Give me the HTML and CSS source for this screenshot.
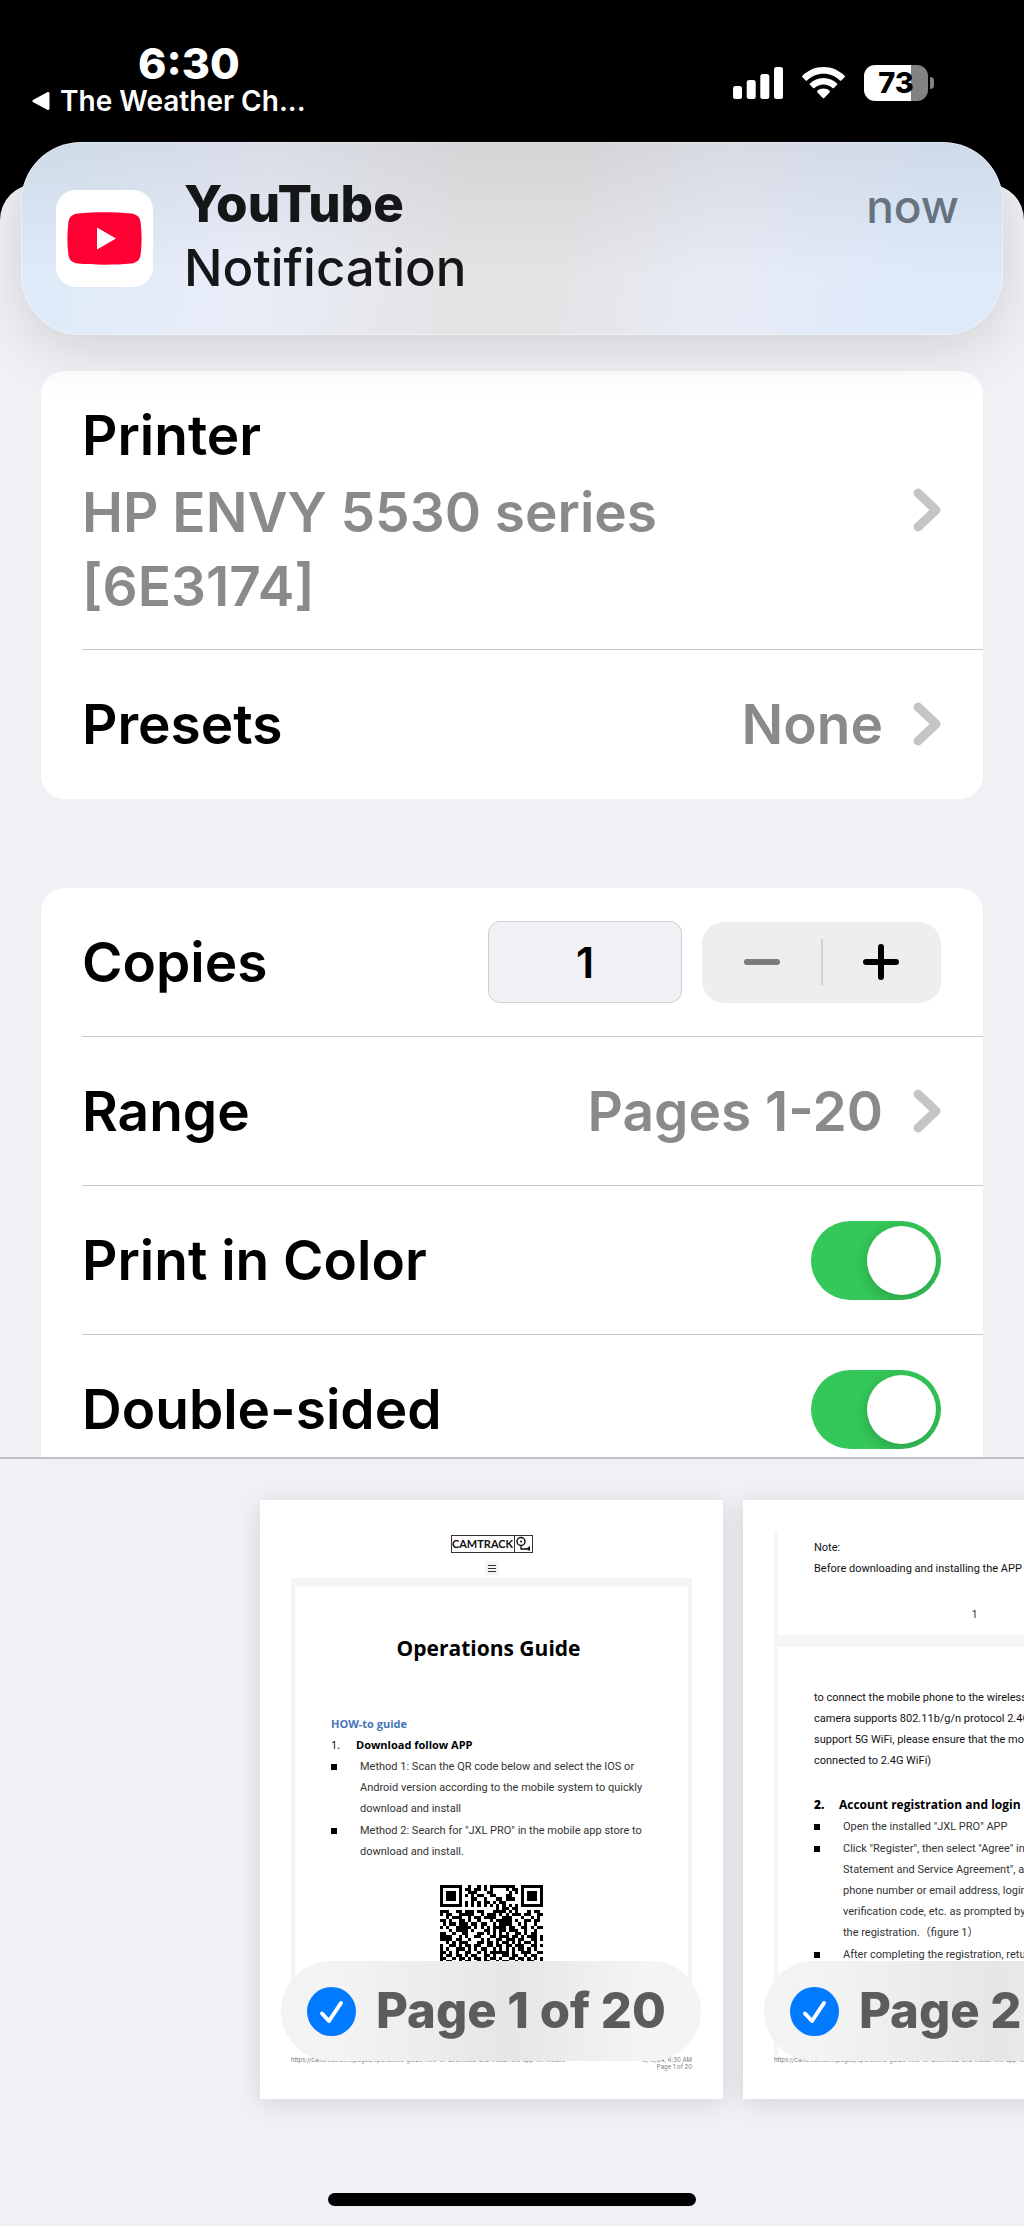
FILE: index.html
```html
<!DOCTYPE html>
<html lang="en">
  <head>
    <meta charset="UTF-8" />
    <meta name="viewport" content="width=device-width, initial-scale=1.0" />
    <title>Print Options</title>
    <link rel="stylesheet" href="styles.css">
  </head>
  <body>
    <div class="screen">
      <!-- Status bar -->
      <header class="status-bar">
        <div class="status-left">
          <div class="status-time">6:30</div>
          <a class="status-back" href="#">
            <svg width="18" height="18" viewBox="0 0 18 18"><path d="M16 1.5v15L2 9z" fill="#fff" stroke="#fff" stroke-width="3" stroke-linejoin="round" /></svg>
            The Weather Ch...
          </a>
        </div>
        <div class="status-right">
          <svg width="50" height="32" viewBox="0 0 50 32" fill="#fff">
            <rect x="0" y="19" width="9" height="13" rx="2.5" />
            <rect x="13.7" y="13" width="9" height="19" rx="2.5" />
            <rect x="27.3" y="7" width="9" height="25" rx="2.5" />
            <rect x="41" y="0" width="9" height="32" rx="2.5" />
          </svg>
          <svg width="43" height="32" viewBox="0 0 43 32" fill="#fff">
            <path d="M21.500 0C13.200 0 5.700 3.400.4 8.800c-.4.400-.4 1 0 1.400l3.300 3.200c.4.400 1 .4 1.400 0C9.300 9.200 15.100 6.700 21.500 6.700s12.200 2.500 16.400 6.700c.4.400 1 .4 1.400 0l3.300-3.200c.4-.4.4-1 0-1.400C37.300 3.400 29.800 0 21.500 0z" />
            <path d="M21.500 10.900c-5.300 0-10.100 2.100-13.600 5.500-.4.400-.4 1 0 1.400l3.200 3.200c.4.400 1 .4 1.400 0 2.400-2.200 5.500-3.600 9-3.600s6.600 1.400 9 3.600c.4.400 1 .4 1.400 0l3.200-3.200c.4-.4.4-1 0-1.400-3.500-3.400-8.300-5.500-13.600-5.500z" />
            <path d="M21.500 21.600c-2.400 0-4.500.8-6.200 2.200-.4.400-.4 1 0 1.400l5.500 5.700c.4.400 1 .4 1.400 0l5.500-5.700c.4-.4.4-1 0-1.400-1.700-1.400-3.800-2.200-6.200-2.200z" />
          </svg>
          <div class="battery">
            <div class="battery-body">73</div>
            <div class="battery-tip"></div>
          </div>
        </div>
      </header>

      <!-- Print options sheet -->
      <main class="sheet">
        <div class="options">
          <section class="card">
            <button class="row row-tall" type="button">
              <span class="row-text">
                <span class="row-title">Printer</span>
                <span class="row-value">HP ENVY 5530 series [6E3174]</span>
              </span>
              <svg class="chevron" width="28" height="44" viewBox="0 0 28 44"><path d="M5 5l18 17L5 39" /></svg>
            </button>
            <button class="row" type="button">
              <span class="row-title">Presets</span>
              <span class="row-value">None</span>
              <svg class="chevron" width="28" height="44" viewBox="0 0 28 44"><path d="M5 5l18 17L5 39" /></svg>
            </button>
          </section>

          <section class="card">
            <div class="row">
              <label class="row-title" for="copies">Copies</label>
              <input class="copies-input" id="copies" type="text" inputmode="numeric" value="1" />
              <div class="stepper">
                <button type="button" aria-label="Decrease" disabled>
                  <svg width="36" height="36" viewBox="0 0 36 36"><path d="M3 18h30" /></svg>
                </button>
                <button type="button" aria-label="Increase">
                  <svg width="36" height="36" viewBox="0 0 36 36"><path d="M3 18h30M18 3v30" /></svg>
                </button>
              </div>
            </div>
            <button class="row" type="button">
              <span class="row-title">Range</span>
              <span class="row-value">Pages 1-20</span>
              <svg class="chevron" width="28" height="44" viewBox="0 0 28 44"><path d="M5 5l18 17L5 39" /></svg>
            </button>
            <div class="row">
              <label class="row-title" for="color">Print in Color</label>
              <input class="switch" id="color" type="checkbox" checked />
            </div>
            <div class="row">
              <label class="row-title" for="duplex">Double-sided</label>
              <input class="switch" id="duplex" type="checkbox" checked />
            </div>
          </section>
        </div>

        <!-- Page previews -->
        <section class="previews">
          <article class="page">
            <div class="page-logo">
              <span>CAMTRACK</span>
              <svg width="17" height="16" viewBox="0 0 17 16" fill="none" stroke="#111">
                <circle cx="6" cy="5.500" r="4" stroke-width="1.500" />
                <circle cx="6" cy="5.500" r="1" fill="#111" stroke="none" />
                <path d="M6 9.500v3.500h6" stroke-width="1.300" />
                <path d="M11 13l4-3v5z" fill="#111" stroke="none" />
              </svg>
            </div>
            <div class="page-menu">
              <svg width="8" height="8" viewBox="0 0 8 8" stroke="#333"><path d="M0 1.500h8M0 4.500h8M0 7.500h8" /></svg>
            </div>
            <div class="doc doc-first">
              <h1>Operations Guide</h1>
              <h2>HOW-to guide</h2>
              <h3><i>1.</i>Download follow APP</h3>
              <ul>
                <li>Method 1: Scan the QR code below and select the IOS or<br />Android version according to the mobile system to quickly<br />download and install</li>
                <li>Method 2: Search for "JXL PRO" in the mobile app store to<br />download and install.</li>
              </ul>
              <svg class="qr" width="103" height="103" viewBox="0 0 33 33" shape-rendering="crispEdges"><path id="qr-modules" /></svg>
            </div>
            <div class="page-footer">
              <span>https://camtrack.com/pages/operations-guide-how-to-download-and-install-the-app-on-mobile</span>
              <span>10/10/24, 6:30 AM<br />Page 1 of 20</span>
            </div>
            <label class="page-badge">
              <input type="checkbox" checked />
              <svg width="49" height="49" viewBox="0 0 49 49"><circle cx="24.500" cy="24.500" r="24.500" /><path d="M15 26.500l7 7.500 12-18" /></svg>
              Page 1 of 20
            </label>
          </article>

          <article class="page">
            <div class="doc doc-tail">
              <p>Note:<br />Before downloading and installing the APP</p>
              <div class="doc-number">1</div>
            </div>
            <div class="doc doc-next">
              <p>to connect the mobile phone to the wireless<br />camera supports 802.11b/g/n protocol 2.4G<br />support 5G WiFi, please ensure that the mobile<br />connected to 2.4G WiFi)</p>
              <h3><b>2.</b>Account registration and login</h3>
              <ul>
                <li>Open the installed "JXL PRO" APP</li>
                <li>Click "Register", then select "Agree" in<br />Statement and Service Agreement", a<br />phone number or email address, login<br />verification code, etc. as prompted by<br />the registration.（figure 1）</li>
                <li>After completing the registration, return</li>
              </ul>
            </div>
            <div class="page-footer">
              <span>https://camtrack.com/pages/operations-guide-how-to-download-and-install-the-app-on-mobile<br />&nbsp;</span>
            </div>
            <label class="page-badge">
              <input type="checkbox" checked />
              <svg width="49" height="49" viewBox="0 0 49 49"><circle cx="24.500" cy="24.500" r="24.500" /><path d="M15 26.500l7 7.500 12-18" /></svg>
              Page 2 of 20
            </label>
          </article>
        </section>
      </main>

      <!-- Notification banner over the sheet -->
      <aside class="notification">
        <svg width="97" height="97" viewBox="0 0 97 97">
          <rect width="97" height="97" rx="20" fill="#fff" />
          <path d="M22 23.500c16-1.600 37-1.600 53 0 6 .7 9 3.500 9.700 9.500 1.200 10 1.200 21 0 31-.7 6-3.700 8.800-9.700 9.500-16 1.600-37 1.600-53 0-6-.7-9-3.500-9.700-9.500-1.200-10-1.200-21 0-31 .7-6 3.700-8.800 9.700-9.500z" fill="#ff0033" />
          <path d="M41 37.500v22l19-11z" fill="#fff" />
        </svg>
        <div class="notification-text">
          <strong>YouTube</strong>
          <span>Notification</span>
        </div>
        <time>now</time>
      </aside>

      <div class="home-indicator"></div>
    </div>

    <script src="qr.js"></script>
  </body>
</html>
```
FILE: styles.css
```css
* {
  box-sizing: border-box;
}

body {
  font-family: Inter, "Liberation Sans", sans-serif;
  margin: 0;
  background-color: #000;
  color: #000;
}

button,
input {
  font: inherit;
  color: inherit;
  margin: 0;
  border: none;
}

svg {
  display: block;
  flex: none;
}

.screen {
  position: relative;
  height: 100vh;
  display: flex;
  flex-direction: column;
  overflow: hidden;
}

/* status bar */
.status-bar {
  height: 184px;
  flex: none;
  display: flex;
  justify-content: space-between;
  color: #fff;
}

.status-left {
  padding: 40px 0 0 32px;
}

.status-time {
  font-size: 43px;
  line-height: 46px;
  font-weight: 800;
  text-align: center;
  padding-left: 40px;
}

.status-back {
  display: flex;
  align-items: center;
  gap: 10px;
  color: #fff;
  font-size: 28px;
  line-height: 30px;
  font-weight: 600;
  text-decoration: none;
}

.status-right {
  display: flex;
  gap: 19px;
  align-items: center;
  height: 36px;
  margin: 65px 90px 0 0;
}

.battery {
  display: flex;
  align-items: center;
  gap: 2px;
}

.battery-body {
  width: 64px;
  height: 36px;
  border-radius: 11px;
  background: linear-gradient(to right, #fff 73%, #828282 73%);
  color: #000;
  font-size: 29px;
  line-height: 36px;
  font-weight: 800;
  text-align: center;
}

.battery-tip {
  width: 4px;
  height: 12px;
  border-radius: 0 4px 4px 0;
  background-color: #828282;
}

/* sheet */
.sheet {
  flex: 1;
  min-height: 0;
  display: flex;
  flex-direction: column;
  background-color: #f1f0f5;
  border-radius: 36px 36px 0 0;
}

.options {
  flex: 1;
  min-height: 0;
  overflow: hidden;
  padding: 187px 41px 0;
  display: flex;
  flex-direction: column;
  gap: 89px;
}

.card {
  flex: none;
  background-color: #fff;
  border-radius: 24px;
}

.row {
  position: relative;
  width: 100%;
  min-height: 149px;
  padding: 0 42px 1px 41px;
  display: flex;
  align-items: center;
  background: none;
  text-align: left;
  font-size: 55px;
  line-height: 74px;
  font-weight: 600;
}

.row + .row::before {
  content: "";
  position: absolute;
  top: -1px;
  left: 41px;
  right: 0;
  height: 1px;
  background-color: #c9c9cb;
}

.row-tall {
  min-height: 279px;
}

.row-text {
  flex: 1;
  max-width: 640px;
  display: flex;
  flex-direction: column;
  gap: 3px;
}

.row-title {
  flex: 1;
}

.row-value {
  color: #8a8a8a;
}

.chevron {
  margin-left: auto;
  fill: none;
  stroke: #c5c5c7;
  stroke-width: 9;
  stroke-linecap: round;
  stroke-linejoin: round;
}

.row-title + .row-value + .chevron {
  margin-left: 30px;
}

.copies-input {
  width: 194px;
  height: 82px;
  margin-right: 20px;
  border: 1px solid #cfcfd3;
  border-radius: 12px;
  background-color: #f1f0f5;
  font-size: 43px;
  text-align: center;
}

.stepper {
  width: 239px;
  height: 81px;
  display: flex;
  border-radius: 22px;
  background: linear-gradient(#d2d2d4, #d2d2d4) center / 2px 46px no-repeat #eeeeee;
}

.stepper button {
  flex: 1;
  padding: 0;
  display: flex;
  align-items: center;
  justify-content: center;
  background: none;
}

.stepper svg {
  fill: none;
  stroke: #000;
  stroke-width: 6;
  stroke-linecap: round;
}

.stepper button:disabled svg {
  stroke: #7b7b7b;
}

.switch {
  appearance: none;
  width: 130px;
  height: 79px;
  border-radius: 40px;
  background-color: #e9e9eb;
  overflow: hidden;
}

.switch::before {
  content: "";
  display: block;
  width: 69px;
  height: 69px;
  margin: 5px;
  border-radius: 50%;
  background-color: #fff;
  box-shadow: 0 4px 14px rgba(0, 0, 0, 0.2);
}

.switch:checked {
  background-color: #34c759;
}

.switch:checked::before {
  margin-left: 56px;
}

/* page previews */
.previews {
  flex: none;
  display: flex;
  gap: 20px;
  padding: 41px 0 127px 260px;
  border-top: 2px solid #c1c0c6;
  overflow: hidden;
}

.page {
  position: relative;
  flex: none;
  width: 463px;
  height: 599px;
  padding: 30px 31px 0;
  background-color: #fff;
  box-shadow: 0 4px 24px rgba(0, 0, 0, 0.12);
  font-family: Roboto, "Noto Sans CJK SC", sans-serif;
  font-size: 11px;
  line-height: 21px;
  color: #333;
}

.page-logo {
  display: flex;
  align-items: center;
  width: 82px;
  height: 18px;
  margin: 5px auto 0;
  border: 1px solid #333;
  font-family: Lato, sans-serif;
  font-size: 11px;
  line-height: 16px;
  font-weight: 700;
  color: #111;
}

.page-logo span {
  width: 64px;
  text-align: center;
  border-right: 1px solid #333;
}

.page-menu {
  width: 14px;
  height: 14px;
  margin: 8px auto 3px;
  display: flex;
  align-items: center;
  justify-content: center;
  background-color: #f2f2f2;
}

.doc {
  border: solid #f5f5f5;
  border-width: 0 4px;
  padding: 0 36px;
  white-space: nowrap;
}

.doc h1,
.doc h2,
.doc h3 {
  font-family: "Open Sans", "Noto Sans", sans-serif;
  font-weight: 700;
  color: #000;
}

.doc h1 {
  margin: 0 0 50px;
  padding-right: 6px;
  font-size: 21px;
  line-height: 30px;
  text-align: center;
}

.doc h2,
.doc h3 {
  margin: 0;
  font-size: 11px;
  line-height: 21px;
}

.doc h2 {
  color: #4674b8;
}

.doc h3 i,
.doc h3 b {
  display: inline-block;
  width: 25px;
}

.doc h3 i {
  font-style: normal;
  font-weight: 400;
}

.doc p {
  margin: 0;
  color: #111;
}

.doc ul {
  margin: 1px 0 0;
  padding: 0;
  list-style: none;
}

.doc li {
  position: relative;
  padding-left: 29px;
  margin-bottom: 1px;
}

.doc li::before {
  content: "";
  position: absolute;
  left: 0;
  top: 8px;
  width: 6px;
  height: 6px;
  background-color: #000;
}

.doc-first {
  height: 460px;
  border-top-width: 9px;
  padding-top: 46px;
}

.doc-tail {
  height: 105px;
  padding-top: 7px;
}

.doc-number {
  margin-top: 25px;
  text-align: center;
}

.doc-next {
  height: 426px;
  border-top-width: 12px;
  padding-top: 40px;
}

.doc-next h3 {
  margin-top: 23px;
  font-size: 12px;
}

.qr {
  margin: 23px auto 0;
}

.page-footer {
  position: absolute;
  left: 31px;
  right: 31px;
  bottom: 29px;
  display: flex;
  justify-content: space-between;
  font-family: Inter, sans-serif;
  font-size: 6px;
  line-height: 7px;
  color: #777;
  white-space: nowrap;
}

.page-footer span:last-child:not(:first-child) {
  text-align: right;
}

.page-badge {
  position: absolute;
  left: 21px;
  right: 22px;
  bottom: 38px;
  height: 100px;
  padding-left: 26px;
  display: flex;
  align-items: center;
  gap: 20px;
  border-radius: 50px;
  background: linear-gradient(to right, #f3f3f3 15%, #e6e6e6 55%, #f4f4f4 85%);
  font-family: Inter, sans-serif;
  font-size: 49px;
  line-height: 60px;
  font-weight: 800;
  color: #5c5c5c;
  white-space: nowrap;
}

.page-badge input {
  position: absolute;
  opacity: 0;
}

.page-badge circle {
  fill: #007aff;
}

.page-badge path {
  fill: none;
  stroke: #fff;
  stroke-width: 4;
  stroke-linecap: round;
  stroke-linejoin: round;
}

/* notification banner */
.notification {
  position: absolute;
  top: 142px;
  left: 21px;
  right: 21px;
  height: 193px;
  padding: 0 44px 0 35px;
  display: flex;
  align-items: center;
  border-radius: 60px;
  background:
    linear-gradient(to bottom, rgba(0, 0, 0, 0.07), rgba(0, 0, 0, 0) 70%),
    linear-gradient(100deg, #dfebf9 5%, #e9edf8 25%, #e4e4e6 45%, #e4e4e6 55%, #e8ebf5 70%, #deeafa 90%);
  box-shadow: 0 12px 60px rgba(0, 0, 0, 0.14), inset 0 0 0 1px rgba(255, 255, 255, 0.4);
  color: #141618;
}

.notification-text {
  flex: 1;
  margin-left: 31px;
  padding-bottom: 5px;
  display: flex;
  flex-direction: column;
  font-size: 51px;
  line-height: 64px;
}

.notification-text strong {
  font-weight: 800;
}

.notification-text span {
  font-weight: 500;
}

.notification time {
  align-self: flex-start;
  margin-top: 32px;
  font-size: 46px;
  line-height: 64px;
  font-weight: 500;
  color: #66727f;
}

.home-indicator {
  position: absolute;
  left: 32%;
  right: 32%;
  bottom: 20px;
  height: 13px;
  border-radius: 7px;
  background-color: #000;
}
```
FILE: qr.js
```javascript
// one string per row, # is a dark module
const rows = [
  "#######..#..#.#.########..#######",
  "#.....#.##.##.#.#....#.##.#.....#",
  "#.###.#..###...##.....#.#.#.###.#",
  "#.###.#.#.#.##..##...##...#.###.#",
  "#.###.#...##..#...##.###..#.###.#",
  "#.....#.#.#.#.##.#.##.....#.....#",
  "#######.#.#.#.#.#.#.#.#.#.#######",
  "..................#.##.##........",
  "###..##.###.##...####.#.#...#.##.",
  "#.##..#####..#.###.#.#.###.##..##",
  "..#.###..#.##.####..###...#..#.#.",
  "##.#..##.#..#...#.#####.#..##.##.",
  ".#.##.###.##.##..#.####..#.#..#..",
  "#.#..#####.#.#.#.####.##..##.#.##",
  "...#.####.#...##.#.##.###..#..#..",
  "##..#..##...##.#.#.#.#..##.#.##..",
  "####..#.#..##...##.###.##.#.###.#",
  "####.##..#...#.#..##.###.##..##.#",
  "..#.#.###...##.##.#.##.#.#.##.#..",
  "#..##.#.##.##..##.##.##.###..##.#",
  "#.#..###.#.#.##..#.#.#.#.##.#.#..",
  "##.#.#..##..#.#.######.#..###..##",
  "#.##.##.#.##..##.#..##.##..#.##..",
  "##..#.##.#.##.#.##.#..##.##.#.#.#",
  "#.##..#.##..#.##..#.##..#.#.##..#",
];

let d = "";
rows.forEach((row, y) => {
  [...row].forEach((cell, x) => {
    if (cell === "#") d += `M${x} ${y}h1v1h-1z`;
  });
});
document.getElementById("qr-modules").setAttribute("d", d);
```
